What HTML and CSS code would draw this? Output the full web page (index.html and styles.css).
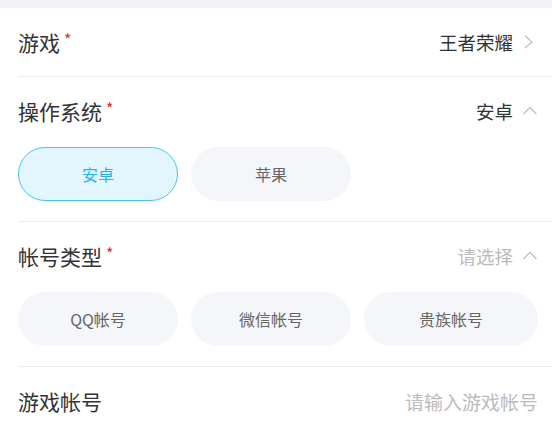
FILE: index.html
```html
<!DOCTYPE html>
<html lang="zh-CN">
<head>
  <meta charset="UTF-8" />
  <meta name="viewport" content="width=device-width, initial-scale=1" />
  <title>账号信息</title>
  <link rel="stylesheet" href="styles.css">
</head>
<body>
  <div class="topbar"></div>
  <div class="form">
    <div class="field">
      <div class="field-head">
        <span class="label">游戏<span class="req">*</span></span>
        <span class="value">王者荣耀</span>
        <svg class="arrow" viewBox="0 0 16 16"><polyline points="3,2 10,8 3,14" /></svg>
      </div>
    </div>

    <div class="field">
      <div class="field-head">
        <span class="label">操作系统<span class="req">*</span></span>
        <span class="value">安卓</span>
        <svg class="arrow" viewBox="0 0 16 16"><polyline points="1.5,11 8,4.5 14.5,11" /></svg>
      </div>
      <div class="chips">
        <button class="chip active">安卓</button>
        <button class="chip">苹果</button>
      </div>
    </div>

    <div class="field">
      <div class="field-head">
        <span class="label">帐号类型<span class="req">*</span></span>
        <span class="value empty">请选择</span>
        <svg class="arrow" viewBox="0 0 16 16"><polyline points="1.5,11 8,4.5 14.5,11" /></svg>
      </div>
      <div class="chips">
        <button class="chip">QQ帐号</button>
        <button class="chip">微信帐号</button>
        <button class="chip">贵族帐号</button>
      </div>
    </div>

    <div class="field last">
      <div class="field-head">
        <span class="label">游戏帐号</span>
        <input class="input" type="text" placeholder="请输入游戏帐号" />
      </div>
    </div>
  </div>
</body>
</html>
```

FILE: styles.css
```css
body {
  margin: 0;
  background: #fff;
  font-family: "Noto Sans CJK SC", "Noto Sans", sans-serif;
  color: #333;
}
.topbar {
  height: 8px;
  background: #f2f3f7;
}
.form {
  padding: 0 14px 0 18px;
}
.field {
  border-bottom: 1px solid #ebebeb;
  margin-right: -14px;
  padding-right: 14px;
}
.field.last {
  border-bottom: none;
}
.field-head {
  height: 68px;
  display: flex;
  align-items: center;
}
.label {
  font-size: 21px;
  color: #333;
  flex: 1;
  white-space: nowrap;
}
.req {
  color: #f5222d;
  font-size: 16px;
  margin-left: 4px;
  vertical-align: 0.3em;
}
.value {
  font-size: 18.5px;
  color: #333;
}
.value.empty {
  color: #bbbbbb;
}
.arrow {
  width: 16px;
  height: 16px;
  margin-left: 9px;
  fill: none;
  stroke: #c4c4c4;
  stroke-width: 1.4;
}
.input {
  border: none;
  outline: none;
  text-align: right;
  font-family: inherit;
  font-size: 19px;
  color: #333;
  width: 220px;
  padding: 0;
  background: transparent;
}
.input::placeholder {
  color: #bbbbbb;
}
.chips {
  display: grid;
  grid-template-columns: 160px 160px 1fr;
  column-gap: 13px;
  margin-top: 2px;
  padding-bottom: 20px;
}
.chip {
  height: 54px;
  border-radius: 27px;
  border: 1px solid transparent;
  background: #f5f6fa;
  color: #666;
  font-family: inherit;
  font-size: 16px;
  padding: 0;
  cursor: pointer;
}
.chip.active {
  background: #e3f6fe;
  border-color: #45c6f8;
  color: #22b4f3;
}
```
